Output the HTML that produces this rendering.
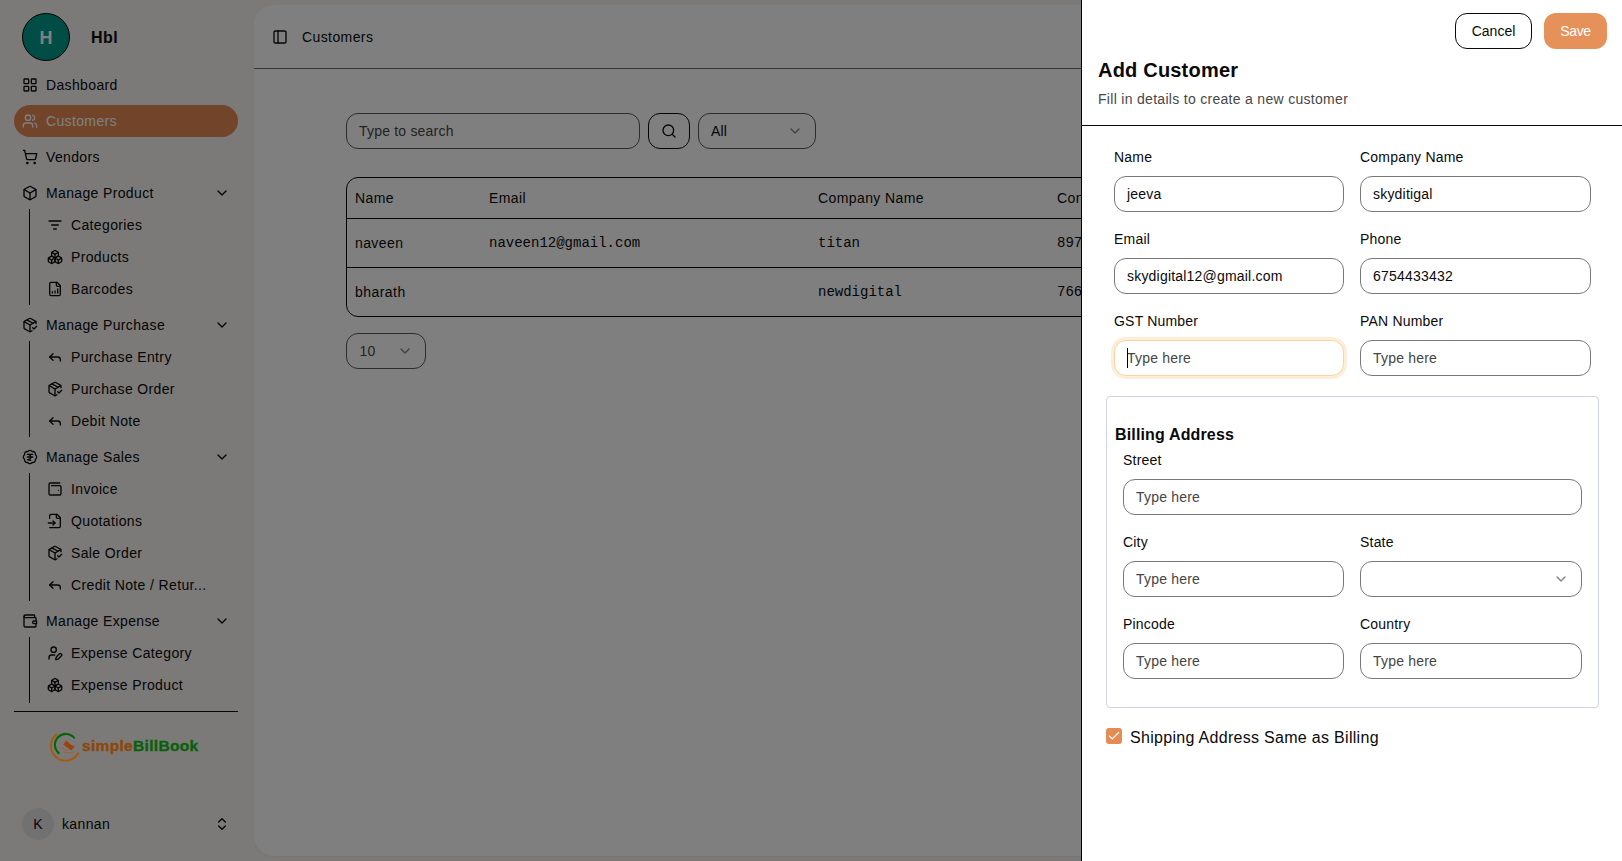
<!DOCTYPE html>
<html><head><meta charset="utf-8">
<style>
*{box-sizing:border-box;margin:0;padding:0}
html,body{width:1622px;height:861px;overflow:hidden}
body{font-family:"Liberation Sans",sans-serif;background:#f6f4f1;color:#0a0a0a;position:relative}
.abs{position:absolute}
svg.i{position:absolute;width:16px;height:16px;fill:none;stroke:#0a0a0a;stroke-width:2;stroke-linecap:round;stroke-linejoin:round}
.it{position:absolute;font-size:14px;line-height:20px;height:20px;white-space:nowrap;letter-spacing:0.36px}
.vl{position:absolute;left:29px;width:1px;background:#0a0a0a}
#main{position:absolute;left:254px;top:5px;width:1360px;height:851px;background:#fff;border-radius:20px;box-shadow:0 1px 2px rgba(0,0,0,.05)}
#overlay{position:absolute;left:0;top:0;width:1622px;height:861px;background:rgba(0,0,0,.5)}
#drawer{position:absolute;left:1081px;top:0;width:541px;height:861px;background:#fff;border-left:1px solid #000}
.lbl{position:absolute;font-size:14px;line-height:20px;white-space:nowrap;letter-spacing:0.2px;color:#0a0a0a}
.inp{position:absolute;height:36px;border:1px solid #787878;border-radius:12px;background:#fff;font-size:14px;line-height:34px;padding-left:12px;white-space:nowrap;letter-spacing:0.2px;color:#0a0a0a}
.ph{color:#454545}
</style></head><body>

<!-- SIDEBAR -->
<div class="abs" style="left:22px;top:13px;width:48px;height:48px;border-radius:50%;background:#009a8a;border:1px solid #000;color:#fff;font-size:18px;font-weight:700;line-height:49.5px;text-align:center">H</div>
<div class="it" style="left:91px;top:28px;font-size:16px;font-weight:700;letter-spacing:0.4px">Hbl</div>

<svg class="i" style="left:22px;top:77px" viewBox="0 0 24 24"><rect x="3" y="3" width="7" height="7" rx="1"/><rect x="14" y="3" width="7" height="7" rx="1"/><rect x="14" y="14" width="7" height="7" rx="1"/><rect x="3" y="14" width="7" height="7" rx="1"/></svg>
<div class="it" style="left:46px;top:75px">Dashboard</div>

<div class="abs" style="left:14px;top:105px;width:224px;height:32px;border-radius:16px;background:#e48b55"></div>
<svg class="i" style="left:22px;top:113px;stroke:#fff" viewBox="0 0 24 24"><path d="M16 21v-2a4 4 0 0 0-4-4H6a4 4 0 0 0-4 4v2"/><circle cx="9" cy="7" r="4"/><path d="M22 21v-2a4 4 0 0 0-3-3.87"/><path d="M16 3.13a4 4 0 0 1 0 7.75"/></svg>
<div class="it" style="left:46px;top:111px;color:#fff">Customers</div>

<svg class="i" style="left:22px;top:149px" viewBox="0 0 24 24"><circle cx="8" cy="21" r="1"/><circle cx="19" cy="21" r="1"/><path d="M2.05 2.05h2l2.66 12.42a2 2 0 0 0 2 1.58h9.78a2 2 0 0 0 1.95-1.57l1.65-7.43H5.12"/></svg>
<div class="it" style="left:46px;top:147px">Vendors</div>

<svg class="i" style="left:22px;top:185px" viewBox="0 0 24 24"><path d="M21 8a2 2 0 0 0-1-1.73l-7-4a2 2 0 0 0-2 0l-7 4A2 2 0 0 0 3 8v8a2 2 0 0 0 1 1.730l7 4a2 2 0 0 0 2 0l7-4A2 2 0 0 0 21 16Z"/><path d="m3.3 7 8.7 5 8.7-5"/><path d="M12 22V12"/></svg>
<div class="it" style="left:46px;top:183px">Manage Product</div>
<svg class="i" style="left:214px;top:185px" viewBox="0 0 24 24"><path d="m6 9 6 6 6-6"/></svg>
<div class="vl" style="top:209px;height:96px"></div>

<svg class="i" style="left:47px;top:217px" viewBox="0 0 24 24"><path d="M3 6h18"/><path d="M7 12h10"/><path d="M10 18h4"/></svg>
<div class="it" style="left:71px;top:215px">Categories</div>
<svg class="i ibx" style="left:47px;top:249px" viewBox="0 0 24 24"><path d="M2.97 12.92A2 2 0 0 0 2 14.63v3.24a2 2 0 0 0 .97 1.71l3 1.8a2 2 0 0 0 2.06 0L12 19v-5.5l-5-3-4.03 2.42Z"/><path d="m7 16.5-4.740-2.85"/><path d="m7 16.5 5-3"/><path d="M7 16.5v5.17"/><path d="M12 13.5V19l3.97 2.38a2 2 0 0 0 2.06 0l3-1.8a2 2 0 0 0 .97-1.710v-3.24a2 2 0 0 0-.97-1.71L17 10.5l-5 3Z"/><path d="m17 16.5-5-3"/><path d="m17 16.5 4.74-2.85"/><path d="M17 16.5v5.17"/><path d="M7.97 4.42A2 2 0 0 0 7 6.13v4.37l5 3 5-3V6.130a2 2 0 0 0-.97-1.71l-3-1.8a2 2 0 0 0-2.06 0l-3 1.8Z"/><path d="M12 8 7.26 5.15"/><path d="m12 8 4.74-2.85"/><path d="M12 13.5V8"/></svg>
<div class="it" style="left:71px;top:247px">Products</div>
<svg class="i" style="left:47px;top:281px" viewBox="0 0 24 24"><path d="M15 2H6a2 2 0 0 0-2 2v16a2 2 0 0 0 2 2h12a2 2 0 0 0 2-2V7Z"/><path d="M14 2v4a2 2 0 0 0 2 2h4"/><path d="M8 18v-2"/><path d="M12 18v-3"/><path d="M16 18v-6"/></svg>
<div class="it" style="left:71px;top:279px">Barcodes</div>

<svg style="position:absolute;width:0;height:0"><defs>
<symbol id="pkc" viewBox="0 0 24 24"><path d="m16 16 2 2 4-4"/><path d="M21 10V8a2 2 0 0 0-1-1.73l-7-4a2 2 0 0 0-2 0l-7 4A2 2 0 0 0 3 8v8a2 2 0 0 0 1 1.73l7 4a2 2 0 0 0 2 0l2-1.14"/><path d="m7.5 4.27 9 5.15"/><path d="M3.29 7 12 12l8.71-5"/><path d="M12 22V12"/></symbol>
<symbol id="rep" viewBox="0 0 24 24"><path d="M9 17 4 12 9 7"/><path d="M20 18v-2a4 4 0 0 0-4-4H4"/></symbol>
<symbol id="chev" viewBox="0 0 24 24"><path d="m6 9 6 6 6-6"/></symbol>
<symbol id="boxes" viewBox="0 0 24 24"><path d="M2.97 12.92A2 2 0 0 0 2 14.63v3.24a2 2 0 0 0 .97 1.71l3 1.8a2 2 0 0 0 2.06 0L12 19v-5.5l-5-3-4.03 2.42Z"/><path d="m7 16.5-4.74-2.85"/><path d="m7 16.5 5-3"/><path d="M7 16.5v5.17"/><path d="M12 13.5V19l3.97 2.38a2 2 0 0 0 2.06 0l3-1.8a2 2 0 0 0 .97-1.71v-3.24a2 2 0 0 0-.97-1.71L17 10.5l-5 3Z"/><path d="m17 16.5-5-3"/><path d="m17 16.5 4.74-2.85"/><path d="M17 16.5v5.17"/><path d="M7.97 4.42A2 2 0 0 0 7 6.13v4.37l5 3 5-3V6.13a2 2 0 0 0-.97-1.71l-3-1.8a2 2 0 0 0-2.06 0l-3 1.8Z"/><path d="M12 8 7.26 5.15"/><path d="m12 8 4.74-2.85"/><path d="M12 13.5V8"/></symbol>
</defs></svg>

<svg class="i" style="left:22px;top:317px" viewBox="0 0 24 24"><use href="#pkc"/></svg>
<div class="it" style="left:46px;top:315px">Manage Purchase</div>
<svg class="i" style="left:214px;top:317px" viewBox="0 0 24 24"><use href="#chev"/></svg>
<div class="vl" style="top:341px;height:96px"></div>
<svg class="i" style="left:47px;top:349px" viewBox="0 0 24 24"><use href="#rep"/></svg>
<div class="it" style="left:71px;top:347px">Purchase Entry</div>
<svg class="i" style="left:47px;top:381px" viewBox="0 0 24 24"><use href="#pkc"/></svg>
<div class="it" style="left:71px;top:379px">Purchase Order</div>
<svg class="i" style="left:47px;top:413px" viewBox="0 0 24 24"><use href="#rep"/></svg>
<div class="it" style="left:71px;top:411px">Debit Note</div>

<svg class="i" style="left:22px;top:449px" viewBox="0 0 24 24"><path d="M3.85 8.62a4 4 0 0 1 4.78-4.77 4 4 0 0 1 6.74 0 4 4 0 0 1 4.78 4.78 4 4 0 0 1 0 6.74 4 4 0 0 1-4.77 4.78 4 4 0 0 1-6.75 0 4 4 0 0 1-4.78-4.77 4 4 0 0 1 0-6.76Z"/><path d="M8 8h8"/><path d="M8 12h8"/><path d="m13 17-5-1h1a4 4 0 0 0 0-8"/></svg>
<div class="it" style="left:46px;top:447px">Manage Sales</div>
<svg class="i" style="left:214px;top:449px" viewBox="0 0 24 24"><use href="#chev"/></svg>
<div class="vl" style="top:473px;height:128px"></div>
<svg class="i" style="left:47px;top:481px" viewBox="0 0 24 24"><path d="M17 14h.01"/><path d="M7 7h12a2 2 0 0 1 2 2v10a2 2 0 0 1-2 2H5a2 2 0 0 1-2-2V5a2 2 0 0 1 2-2h14"/></svg>
<div class="it" style="left:71px;top:479px">Invoice</div>
<svg class="i" style="left:47px;top:513px" viewBox="0 0 24 24"><path d="M4 22h14a2 2 0 0 0 2-2V7l-5-5H6a2 2 0 0 0-2 2v4"/><path d="M14 2v4a2 2 0 0 0 2 2h4"/><path d="M2 15h10"/><path d="m9 18 3-3-3-3"/></svg>
<div class="it" style="left:71px;top:511px">Quotations</div>
<svg class="i" style="left:47px;top:545px" viewBox="0 0 24 24"><use href="#pkc"/></svg>
<div class="it" style="left:71px;top:543px">Sale Order</div>
<svg class="i" style="left:47px;top:577px" viewBox="0 0 24 24"><use href="#rep"/></svg>
<div class="it" style="left:71px;top:575px">Credit Note / Retur...</div>

<svg class="i" style="left:22px;top:613px" viewBox="0 0 24 24"><path d="M19 7V4a1 1 0 0 0-1-1H5a2 2 0 0 0 0 4h15a1 1 0 0 1 1 1v4h-3a2 2 0 0 0 0 4h3a1 1 0 0 0 1-1v-2a1 1 0 0 0-1-1"/><path d="M3 5v14a2 2 0 0 0 2 2h15a1 1 0 0 0 1-1v-4"/></svg>
<div class="it" style="left:46px;top:611px">Manage Expense</div>
<svg class="i" style="left:214px;top:613px" viewBox="0 0 24 24"><use href="#chev"/></svg>
<div class="vl" style="top:637px;height:66px"></div>
<svg class="i" style="left:47px;top:645px" viewBox="0 0 24 24"><path d="M11.5 15H7a4 4 0 0 0-4 4v2"/><path d="M21.378 16.626a1 1 0 0 0-3.004-3.004l-4.01 4.012a2 2 0 0 0-.506.854l-.837 2.87a.5.5 0 0 0 .62.62l2.87-.837a2 2 0 0 0 .854-.506z"/><circle cx="10" cy="7" r="4"/></svg>
<div class="it" style="left:71px;top:643px">Expense Category</div>
<svg class="i" style="left:47px;top:677px" viewBox="0 0 24 24"><use href="#boxes"/></svg>
<div class="it" style="left:71px;top:675px">Expense Product</div>

<div class="abs" style="left:14px;top:711px;width:224px;height:1px;background:#0a0a0a"></div>

<!-- LOGO -->
<svg id="logo" class="abs" style="left:40px;top:725px;width:60px;height:45px;z-index:5" viewBox="40 725 60 45">
<path d="M56.51 734.5 A14.6 14.6 0 1 0 78.14 753.3" fill="none" stroke="#a65a0f" stroke-width="2" stroke-linecap="round"/>
<path d="M74.03 737.65 A10.9 10.9 0 1 0 58.79 753.15" fill="none" stroke="#066606" stroke-width="2.1" stroke-linecap="round"/>
<path d="M66.4 740.2 L63.3 744.4 L71.2 750.6 L75 746.4 Q70 745 66.4 740.2 Z" fill="#9a440c"/>
<path d="M63 747 q-1 2.5 4.5 3.5" fill="none" stroke="#a95a20" stroke-width="1"/>
<path d="M63.5 752.2 q5 1.3 11 -0.4" fill="none" stroke="#a0602a" stroke-width="1.2" opacity=".8"/>
</svg>
<div id="logotext" class="abs" style="left:82px;top:737px;font-size:15.5px;line-height:18px;font-weight:700;white-space:nowrap;letter-spacing:0.32px;-webkit-text-stroke:0.35px currentColor;z-index:5"><span style="color:#8c470c">simple</span><span style="color:#0a5f0a">BillBook</span></div>

<!-- USER -->
<div class="abs" style="left:22px;top:808px;width:32px;height:32px;border-radius:50%;background:#e3e3e3;text-align:center;line-height:32px;font-size:14px">K</div>
<div class="it" style="left:62px;top:814px">kannan</div>
<svg class="i" style="left:214px;top:816px" viewBox="0 0 24 24"><path d="m7 15 5 5 5-5"/><path d="m7 9 5-5 5 5"/></svg>


<div id="main"></div>
<svg class="i" style="left:272px;top:29px" viewBox="0 0 24 24"><rect width="18" height="18" x="3" y="3" rx="2"/><path d="M9 3v18"/></svg>
<div class="it" style="left:302px;top:27px;letter-spacing:0.4px">Customers</div>
<div class="abs" style="left:254px;top:68px;width:1360px;height:1px;background:#6b6b6b"></div>

<div class="inp" style="left:346px;top:113px;width:294px;border-color:#5a5a5a"><span class="ph">Type to search</span></div>
<div class="abs" style="left:648px;top:113px;width:42px;height:36px;border:1px solid #0a0a0a;border-radius:12px"></div>
<svg class="i" style="left:661px;top:123px" viewBox="0 0 24 24"><circle cx="11" cy="11" r="8"/><path d="m21 21-4.3-4.3"/></svg>
<div class="inp" style="left:698px;top:113px;width:118px;border-color:#5a5a5a">All</div>
<svg class="i" style="left:787px;top:123px;opacity:.5" viewBox="0 0 24 24"><use href="#chev"/></svg>

<div class="abs" style="left:346px;top:177px;width:900px;height:140px;border:1px solid #0a0a0a;border-radius:12px;overflow:hidden">
 <div class="abs" style="left:0;top:40px;width:900px;height:1px;background:#0a0a0a"></div>
 <div class="abs" style="left:0;top:89px;width:900px;height:1px;background:#0a0a0a"></div>
</div>
<div class="it" style="left:355px;top:188px;letter-spacing:0.4px">Name</div>
<div class="it" style="left:489px;top:188px;letter-spacing:0.4px">Email</div>
<div class="it" style="left:818px;top:188px;letter-spacing:0.4px">Company Name</div>
<div class="it" style="left:1057px;top:188px;letter-spacing:0.4px">Contact</div>
<div class="it" style="left:355px;top:233px;letter-spacing:0.4px">naveen</div>
<div class="it" style="left:489px;top:233px;font-family:'Liberation Mono',monospace;letter-spacing:0">naveen12@gmail.com</div>
<div class="it" style="left:818px;top:233px;font-family:'Liberation Mono',monospace;letter-spacing:0">titan</div>
<div class="it" style="left:1057px;top:233px;font-family:'Liberation Mono',monospace;letter-spacing:0">8976543210</div>
<div class="it" style="left:355px;top:282px;letter-spacing:0.45px">bharath</div>
<div class="it" style="left:818px;top:282px;font-family:'Liberation Mono',monospace;letter-spacing:0">newdigital</div>
<div class="it" style="left:1057px;top:282px;font-family:'Liberation Mono',monospace;letter-spacing:0">7665432109</div>

<div class="inp" style="left:346px;top:333px;width:80px;border-color:#5a5a5a;padding-left:12.5px;color:#4a4a4a">10</div>
<svg class="i" style="left:397px;top:343px;opacity:.5" viewBox="0 0 24 24"><use href="#chev"/></svg>


<div id="overlay"></div>

<div id="drawer">
</div>
<div class="abs" style="left:1455px;top:13px;width:77px;height:36px;border:1px solid #0a0a0a;border-radius:12px;font-size:14px;line-height:34px;text-align:center;letter-spacing:0">Cancel</div>
<div class="abs" style="left:1544px;top:13px;width:63px;height:36px;border-radius:12px;background:#e69159;color:#fff;font-size:14px;line-height:36px;text-align:center;letter-spacing:-0.3px">Save</div>
<div class="abs" style="left:1098px;top:56px;font-size:20px;line-height:28px;font-weight:700;white-space:nowrap;letter-spacing:0.2px">Add Customer</div>
<div class="abs" style="left:1098px;top:89px;font-size:14px;line-height:20px;white-space:nowrap;letter-spacing:0.3px;color:#474747">Fill in details to create a new customer</div>
<div class="abs" style="left:1081px;top:125px;width:541px;height:1px;background:#0a0a0a"></div>

<div class="lbl" style="left:1114px;top:147px">Name</div>
<div class="inp" style="left:1114px;top:176px;width:230px">jeeva</div>
<div class="lbl" style="left:1360px;top:147px">Company Name</div>
<div class="inp" style="left:1360px;top:176px;width:231px">skyditigal</div>
<div class="lbl" style="left:1114px;top:229px">Email</div>
<div class="inp" style="left:1114px;top:258px;width:230px">skydigital12@gmail.com</div>
<div class="lbl" style="left:1360px;top:229px">Phone</div>
<div class="inp" style="left:1360px;top:258px;width:231px">6754433432</div>
<div class="lbl" style="left:1114px;top:311px">GST Number</div>
<div class="abs" style="left:1111px;top:337px;width:236px;height:42px;border-radius:15px;background:#feeed8"></div>
<div class="inp" style="left:1114px;top:340px;width:230px;border-color:#fbd3a0"><span class="ph">Type here</span></div>
<div class="abs" style="left:1127px;top:348px;width:1px;height:20px;background:#000"></div>
<div class="lbl" style="left:1360px;top:311px">PAN Number</div>
<div class="inp" style="left:1360px;top:340px;width:231px"><span class="ph">Type here</span></div>

<div class="abs" style="left:1106px;top:396px;width:493px;height:312px;border:1px solid #cfd5df;border-radius:4px"></div>
<div class="abs" style="left:1115px;top:425px;font-size:16px;line-height:20px;font-weight:700;white-space:nowrap;letter-spacing:0.15px">Billing Address</div>
<div class="lbl" style="left:1123px;top:450px">Street</div>
<div class="inp" style="left:1123px;top:479px;width:459px"><span class="ph">Type here</span></div>
<div class="lbl" style="left:1123px;top:532px">City</div>
<div class="inp" style="left:1123px;top:561px;width:221px"><span class="ph">Type here</span></div>
<div class="lbl" style="left:1360px;top:532px">State</div>
<div class="inp" style="left:1360px;top:561px;width:222px"></div>
<svg class="i" style="left:1553px;top:571px;opacity:.5" viewBox="0 0 24 24"><use href="#chev"/></svg>
<div class="lbl" style="left:1123px;top:614px">Pincode</div>
<div class="inp" style="left:1123px;top:643px;width:221px"><span class="ph">Type here</span></div>
<div class="lbl" style="left:1360px;top:614px">Country</div>
<div class="inp" style="left:1360px;top:643px;width:222px"><span class="ph">Type here</span></div>

<div class="abs" style="left:1106px;top:728px;width:16px;height:16px;border-radius:3px;background:#e58c55"></div>
<svg class="i" style="left:1107px;top:729px;stroke:#fff;width:14px;height:14px;stroke-width:2" viewBox="0 0 24 24"><path d="M20 6 9 17l-5-5"/></svg>
<div class="abs" style="left:1130px;top:728px;font-size:16px;line-height:20px;white-space:nowrap;letter-spacing:0.3px">Shipping Address Same as Billing</div>


</body></html>
